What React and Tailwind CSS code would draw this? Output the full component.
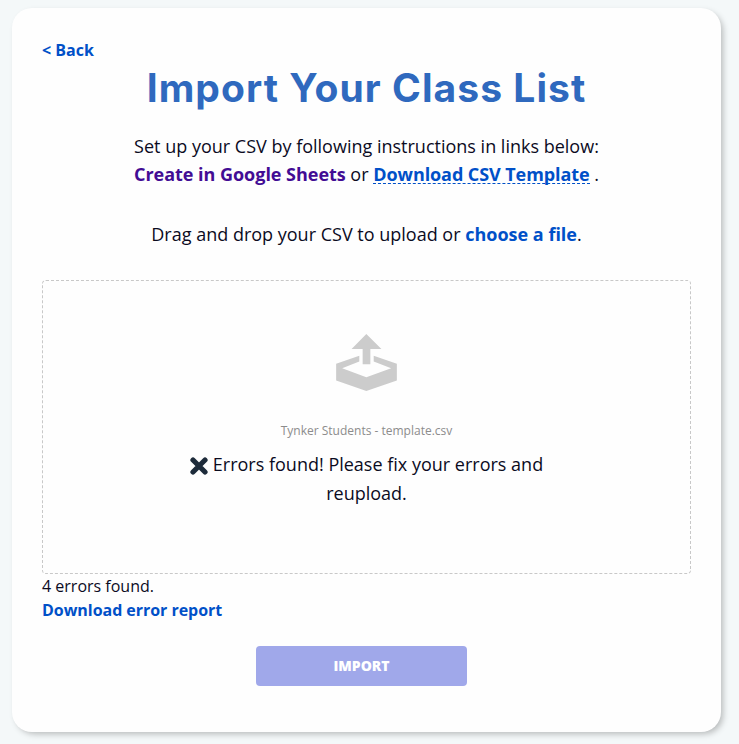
import React, { useState } from 'react';

const FILE_NAME = 'Tynker Students - template.csv';

const UploadIcon = () => (
    <svg viewBox="0 0 181 170" className="w-[61px] h-[57px] fill-[#cccccc]">
        <path d="M90 0 L135 45 H102 V90 H79 V45 H46 Z" />
        <path fillRule="evenodd" d="M0 89 L69 65 V82 L18 102 L90 129 L164 102 L112 82 V65 L181 89 V139 L90 170 L0 139 Z" />
    </svg>
);

const ErrorIcon = () => (
    <svg viewBox="0 0 18 18" className="inline-block w-[18px] h-[18px] mr-[5px] align-[-4px]">
        <path d="M3 3 L15 15 M15 3 L3 15" stroke="#1d2b3a" strokeWidth="5.2" strokeLinecap="round" fill="none" />
    </svg>
);

const App = () => {
    const [errorCount] = useState(4);

    return (
        <div className="h-screen bg-[#f4f8f9] pt-2 pl-3 overflow-hidden font-['Open_Sans',sans-serif] text-[#0b0b1e]">
            <div className="w-[709px] h-[724px] bg-[#fefefe] rounded-[20px] px-[30px] pt-[30px] shadow-[3px_3px_6px_-1px_rgba(0,0,0,0.25)]">
                <a href="#" className="block w-fit text-base leading-6 font-bold text-[#0050c8]">&lt; Back</a>

                <h1 className="text-center whitespace-nowrap text-[39px] leading-[52px] font-bold tracking-[1.05px] text-[#2f69be] font-['Inter',sans-serif]">
                    Import Your Class List
                </h1>

                {/* Instructions */}
                <div className="mt-[18px] text-center text-lg leading-7">
                    <p>Set up your CSV by following instructions in links below:</p>
                    <p>
                        <a href="#" className="font-bold tracking-[-0.03px] text-[#420c94]">Create in Google Sheets</a> or{' '}
                        <a href="#" className="inline-block leading-[18px] font-bold tracking-[-0.08px] text-[#0050c8] border-b border-dashed border-[#0050c8]">Download CSV Template</a> .
                    </p>
                    <p className="mt-8">
                        Drag and drop your CSV to upload or <a href="#" className="font-bold text-[#0050c8]">choose a file</a>.
                    </p>
                </div>

                {/* Drop zone */}
                <div className="mt-8 h-[294px] pt-[53px] border border-dashed border-[#c8c8c8] rounded flex flex-col items-center text-center">
                    <UploadIcon />
                    <p className="mt-[30px] text-xs leading-5 text-[#8c8c8c]">{FILE_NAME}</p>
                    <p className="mt-[9px] w-[370px] text-lg leading-[29px]">
                        <ErrorIcon />Errors found! Please fix your errors and reupload.
                    </p>
                </div>

                <p className="text-base leading-6">{errorCount} errors found.</p>
                <a href="#" className="block w-fit text-base leading-6 font-bold tracking-[-0.04px] text-[#0050c8]">Download error report</a>

                <button className="block ml-[214px] mt-6 w-[211px] h-10 rounded bg-[#a0a8ea] text-sm font-extrabold text-white">
                    IMPORT
                </button>
            </div>
        </div>
    );
};

export default App;
